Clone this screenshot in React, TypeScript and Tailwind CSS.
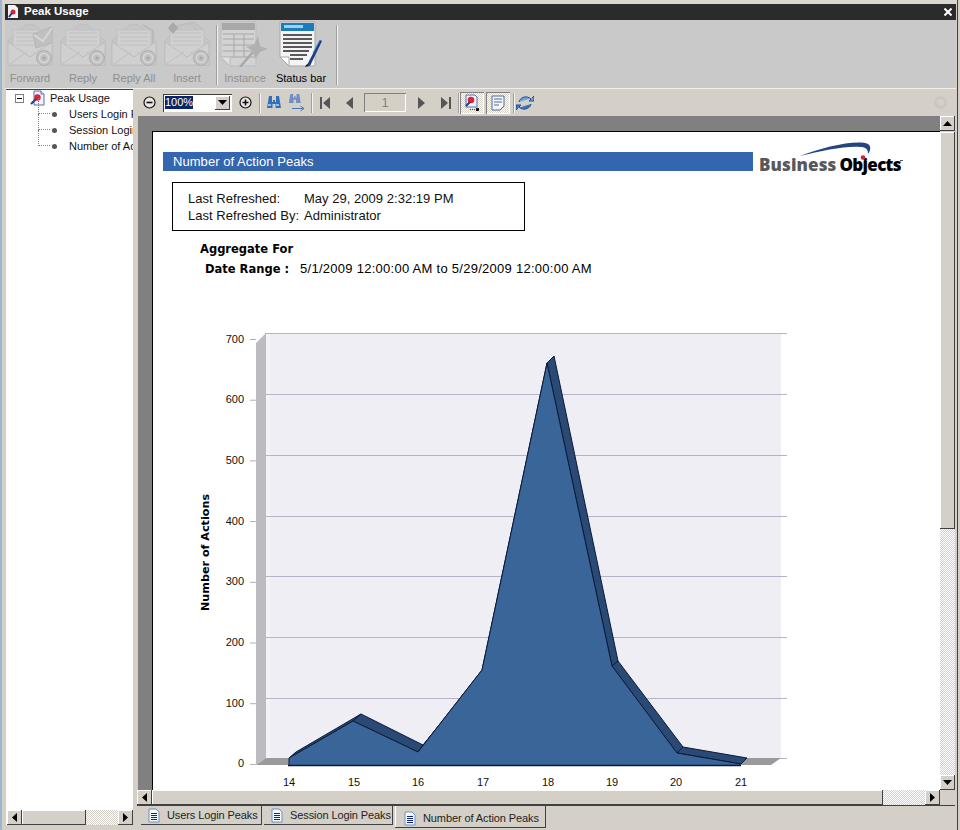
const sans = { fontFamily: '"Liberation Sans", Arial, sans-serif' };

function Envelope({ kind }: { kind: "forward" | "reply" | "all" | "insert" }) {
  return (
    <svg width="46" height="46" viewBox="0 0 46 46">
      {kind === "insert" && <path d="M12 5 L30 1 L40 9 L14 14 Z" fill="#c4c4c4" stroke="#bababa" />}
      <path d="M1 20 L16 6 Q23 0 30 6 L45 20 L45 44 L1 44 Z" fill="#c6c6c6" stroke="#bebebe" />
      <path d="M6 9 H40 V27 L23 36 L6 27 Z" fill="#d0d0d0" stroke="#c0c0c0" />
      <path d="M9 12 H37 M9 16 H37 M9 20 H37 M9 24 H37" stroke="#c0c0c0" />
      {kind === "all" && <path d="M32 4 L42 10 V22" fill="none" stroke="#bababa" strokeWidth="2" />}
      <path d="M1 21 L23 36 L45 21 V44 H1 Z" fill="#d0d0d0" stroke="#bebebe" />
      <path d="M1 44 L20 31 M45 44 L26 31" stroke="#c0c0c0" />
      {kind === "forward" && (
        <g>
          <path d="M26 13 L45 6 L47 21 L29 27 Z" fill="#c0c0c0" stroke="#b6b6b6" />
          <path d="M27 14 L36 20 L45 7" fill="none" stroke="#d6d6d6" strokeWidth="2" />
        </g>
      )}
      {kind === "insert" && <path d="M9 1 L14 7 L9 13 L4 7 Z" fill="#aaaaaa" />}
      <circle cx="37" cy="37" r="7.5" fill="#c0c0c0" stroke="#b0b0b0" />
      <circle cx="37" cy="37" r="4.5" fill="none" stroke="#d8d8d8" strokeWidth="1.4" />
      <circle cx="37" cy="37" r="1.6" fill="#a8a8a8" />
    </svg>
  );
}

function InstanceIcon() {
  return (
    <svg width="50" height="46" viewBox="0 0 50 46">
      <path d="M1 1 H36 V45 H10 L1 36 Z" fill="#d2d2d2" stroke="#bdbdbd" />
      <rect x="2" y="2" width="33" height="7" fill="#a8a8a8" />
      <path d="M3 13 H34 M3 18 H34 M3 24 H34 M3 30 H34 M3 36 H34 M14 13 V36 M24 13 V36" stroke="#a8a8a8" />
      <path d="M1 36 H10 V45 Z" fill="#e0e0e0" stroke="#bdbdbd" />
      <path d="M20 46 L33 31" stroke="#a8a8a8" strokeWidth="2.5" />
      <path d="M38 15 L40 25 L48 28 L40 31 L35 38 L33 30 L26 26 L34 24 Z" fill="#b0b0b0" />
    </svg>
  );
}

function StatusIcon() {
  return (
    <svg width="44" height="46" viewBox="0 0 44 46">
      <path d="M1 1 H36 V45 H10 L1 36 Z" fill="#f4f4f4" stroke="#a8a8a8" />
      <rect x="2" y="2" width="33" height="8" fill="#1a7cbc" />
      <rect x="5" y="4" width="19" height="3" fill="#9ed0ee" />
      <path d="M4 14 H33 M4 18 H33 M4 22 H33 M4 26 H33 M4 30 H30 M11 34 H28 M11 38 H24" stroke="#5a5a5a" strokeWidth="2" />
      <path d="M1 36 H10 V45 Z" fill="#fff" stroke="#a8a8a8" />
      <path d="M28 44 L41 19 L43 20 L31 45 Z" fill="#1d3f7c" />
      <path d="M34 32 L41 19" stroke="#3e86d0" />
      <path d="M26 46 L28 43 L30 45 Z" fill="#111" />
    </svg>
  );
}

function ToolButton({ label, width, disabled, children }: { label: string; width: string; disabled?: boolean; children: React.ReactNode }) {
  return (
    <div className={`flex shrink-0 flex-col items-center ${width}`}>
      <div className="flex h-[47px] items-start justify-center pt-[1px]">{children}</div>
      <span className={`mt-[4px] whitespace-nowrap text-[11px] leading-[14px] ${disabled ? "text-[#8f8f8f]" : "text-black"}`}>{label}</span>
    </div>
  );
}

function ToolSep({ className = "h-[60px]" }: { className?: string }) {
  return <div className={`w-[2px] shrink-0 border-l border-r border-l-[#9f9f9f] border-r-[#f2f2f2] ${className}`} />;
}

function Arrow({ dir, className = "" }: { dir: "up" | "down" | "left" | "right"; className?: string }) {
  const points = { up: "0,5 9,5 4.5,0", down: "0,0 9,0 4.5,5", left: "5,0 5,9 0,4.5", right: "0,0 0,9 5,4.5" }[dir];
  const h = dir === "up" || dir === "down";
  return (
    <svg width={h ? 9 : 5} height={h ? 5 : 9} viewBox={h ? "0 0 9 5" : "0 0 5 9"} className={className}>
      <polygon points={points} fill="#000" />
    </svg>
  );
}

function ScrollBtn({ dir }: { dir: "up" | "down" | "left" | "right" }) {
  return (
    <div className="flex h-[15px] w-[15px] shrink-0 items-center justify-center bg-[#d4d0c8] shadow-[inset_-1px_-1px_#404040,inset_1px_1px_#ffffff]">
      <Arrow dir={dir} />
    </div>
  );
}

const dither = "bg-[repeating-conic-gradient(#ffffff_0_25%,#d4d0c8_0_50%)] bg-[length:2px_2px]";
const thumb = "bg-[#d4d0c8] shadow-[inset_-1px_-1px_#404040,inset_1px_1px_#ffffff]";

function TreeChild({ label }: { label: string }) {
  return (
    <div className="flex h-4 items-center whitespace-nowrap pl-[32px]">
      <div className="mb-4 h-4 w-[12px] shrink-0 border-b border-l border-dotted border-[#808080]" />
      <div className="ml-[2px] h-[5px] w-[5px] shrink-0 rounded-full bg-[#555555]" />
      <span className="ml-[12px] text-[11px] text-[#111111]">{label}</span>
    </div>
  );
}

function TreeIcon() {
  return (
    <svg width="16" height="16" viewBox="0 0 16 16">
      <path d="M4 1 H11 L14 4 V15 H4 Z" fill="#eef3fb" stroke="#5a6fa8" />
      <path d="M11 1 V4 H14" fill="#fff" stroke="#5a6fa8" />
      <circle cx="7.5" cy="7.5" r="3.2" fill="#e2203a" />
      <path d="M1 14 L6 9" stroke="#1e3f90" strokeWidth="2" />
    </svg>
  );
}

function CircleBtn({ plus }: { plus?: boolean }) {
  return (
    <svg width="13" height="13" viewBox="0 0 13 13">
      <circle cx="6.5" cy="6.5" r="5.5" fill="#e8e6e0" stroke="#111" strokeWidth="1.2" />
      <path d={plus ? "M3.5 6.5 H9.5 M6.5 3.5 V9.5" : "M3.5 6.5 H9.5"} stroke="#111" strokeWidth="1.6" />
    </svg>
  );
}

function Binoculars({ arrow }: { arrow?: boolean }) {
  return (
    <svg width="18" height="18" viewBox="0 0 18 18">
      <g fill={arrow ? "#6f8fc4" : "#2f6fc0"} transform={arrow ? "translate(0 -2) scale(0.85)" : "translate(1 1)"}>
        <path d="M3 1 H6 V7 H7 V5 H9 V7 H10 V1 H13 L15 13 H9.5 V9 H6.5 V13 H1 Z" />
      </g>
      {!arrow && <path d="M3 11 H6 M11 11 H14" stroke="#bcd4f2" strokeWidth="1.5" />}
      {arrow && <path d="M4 14.5 H15 M12.5 12 L16 14.5 L12.5 17" fill="none" stroke="#4d74b4" />}
    </svg>
  );
}

function PageNav({ dir }: { dir: "first" | "prev" | "next" | "last" }) {
  const d = {
    first: "M2 1 H4 V13 H2 Z M12 1 V13 L5 7 Z",
    prev: "M11 1 V13 L4 7 Z",
    next: "M4 1 V13 L11 7 Z",
    last: "M3 1 V13 L10 7 Z M11 1 H13 V13 H11 Z",
  }[dir];
  return (
    <svg width="15" height="14" viewBox="0 0 15 14">
      <path d={d} fill="#555555" />
    </svg>
  );
}

function TreeToggleIcon() {
  return (
    <svg width="18" height="18" viewBox="0 0 18 18">
      <path d="M3 1 H12 L14 3 V13 H3 Z" fill="#eef3fb" stroke="#5a6fa8" />
      <circle cx="8" cy="6" r="3.3" fill="#e2203a" />
      <path d="M3 12 L7 8" stroke="#1e3f90" strokeWidth="2" />
      <path d="M7 15.5 H12" stroke="#555" strokeDasharray="1 1" />
      <rect x="13" y="14" width="3" height="3" fill="#111" />
    </svg>
  );
}

function NoteIcon() {
  return (
    <svg width="16" height="16" viewBox="0 0 16 16">
      <path d="M2 1 H14 V11 L10 15 H2 Z" fill="#f7f7f2" stroke="#4f6aa8" />
      <path d="M4 4 H12 M4 7 H12 M4 10 H9" stroke="#4f6aa8" />
    </svg>
  );
}

function RefreshIcon() {
  return (
    <svg width="18" height="16" viewBox="0 0 18 16">
      <path d="M3 7 C4 2 11 0 15 4 L13 6 H18 V1 L16 3" fill="#6fa0d8" stroke="#23508f" />
      <path d="M15 9 C14 14 7 16 3 12 L5 10 H0 V15 L2 13" fill="#3c74b8" stroke="#23508f" />
    </svg>
  );
}

function DocIcon() {
  return (
    <svg width="12" height="15" viewBox="0 0 12 15" className="shrink-0">
      <path d="M1 1 H8 L11 4 V14 H1 Z" fill="#f4f8ff" stroke="#6f8fc6" />
      <path d="M3 5.5 H9 M3 7.5 H9 M3 9.5 H9 M3 11.5 H9" stroke="#12238a" />
    </svg>
  );
}

function Tab({ label, width, active, className = "" }: { label: string; width: string; active?: boolean; className?: string }) {
  return (
    <div
      className={`flex shrink-0 items-center whitespace-nowrap bg-[#d4d0c8] text-[11px] tracking-[-0.1px] text-[#222222] ${width} ${className} ${
        active ? "h-[22px] pl-[9px] pt-[2px] shadow-[inset_-1px_-1px_#404040,inset_1px_0_#ffffff]" : "h-[19px] pl-[7px] shadow-[inset_-1px_-1px_#404040]"
      }`}
    >
      <DocIcon />
      <span className="ml-[7px]">{label}</span>
    </div>
  );
}

// chart points: front edge and the shifted back edge of the 3d area
const front: [number, number][] = [[289, 758], [353, 721], [418, 752], [482, 670], [547, 363], [612, 666], [677, 753], [741, 764]];
const back: [number, number][] = [[296, 752], [361, 714], [423, 745], [489, 664], [554, 356], [618, 661], [683, 747], [747, 758]];
const grid = [333, 394, 455, 516, 576, 637, 698, 758];
const yLabels = ["700", "600", "500", "400", "300", "200", "100", "0"];
const xLabels = [
  ["14", 289],
  ["15", 354],
  ["16", 418],
  ["17", 483],
  ["18", 548],
  ["19", 612],
  ["20", 676],
  ["21", 741],
] as const;

function Chart() {
  const frontLine = front.map((p) => p.join(",")).join(" ");
  return (
    <svg width="610" height="465" viewBox="190 325 610 465" className="ml-[37px] mt-[48px] block shrink-0" style={sans}>
      <rect x="266" y="333" width="515" height="425" fill="#eeeef4" />
      <rect x="266" y="333" width="4" height="425" fill="#f2f2f7" />
      {grid.map((y) => (
        <line key={y} x1="265" x2="787" y1={y + 0.5} y2={y + 0.5} stroke="#b4b4c6" />
      ))}
      <polygon points="256,343 266,333 266,758 256,765" fill="#bcbcc0" />
      <polygon points="256,765 266,758 781,758 771,765" fill="#9a9a9a" />
      {yLabels.map((label, i) => {
        const y = 339.5 + i * 60.7;
        return (
          <g key={label}>
            <line x1="250" x2="256" y1={y} y2={y} stroke="#b0b0b0" />
            <text x="244" y={y + 3} textAnchor="end" fontSize="11" fill="#111">
              {label}
            </text>
          </g>
        );
      })}
      {front.slice(0, -1).map((p, i) => (
        <polygon
          key={i}
          points={`${p[0]},${p[1]} ${back[i][0]},${back[i][1]} ${back[i + 1][0]},${back[i + 1][1]} ${front[i + 1][0]},${front[i + 1][1]}`}
          fill="#2a4a75"
          stroke="#0a1a3a"
          strokeWidth="1"
        />
      ))}
      <polygon points={`289,765 ${frontLine} 741,765`} fill="#3a6598" />
      <polyline points={`289,765 ${frontLine}`} fill="none" stroke="#0a1a3a" strokeWidth="1" />
      <line x1="288" x2="741" y1="765.5" y2="765.5" stroke="#0a1a3a" strokeWidth="1.4" />
      {xLabels.map(([label, x]) => (
        <text key={label} x={x} y="786" textAnchor="middle" fontSize="11" fill="#111">
          {label}
        </text>
      ))}
      <text transform="translate(209 552.5) rotate(-90)" textAnchor="middle" fontWeight="700" fill="#000" style={{ fontFamily: '"DejaVu Sans", sans-serif', fontSize: 11.2 }}>
        Number of Actions
      </text>
    </svg>
  );
}

function Logo() {
  return (
    <div className="relative ml-[6px] mt-[3px] whitespace-nowrap text-[17px] font-extrabold leading-[19px] tracking-[0.1px]" style={{ fontFamily: '"Open Sans", sans-serif' }}>
      <span className="text-[#58585a]">Business</span>
      <span className="ml-[3px] tracking-[-0.7px] text-black">Objects</span>
      <span className="absolute left-[141px] top-[5px] h-px w-[3px] bg-[#555555]" />
      <svg width="80" height="20" viewBox="0 0 80 20" className="absolute left-[41px] top-[-13px]">
        <path d="M0 14 C22 5 58 -3 68 2 C71 4 71 8 68 12 C68 7 66 5 60 5 C44 4 22 9 0 14 Z" fill="#24457f" />
        <circle cx="63" cy="15.5" r="2.3" fill="#d3213c" />
      </svg>
    </div>
  );
}

function Report() {
  return (
    <div className="flex h-full flex-col overflow-hidden border-l border-t border-black bg-white pt-[20px] text-[#111111]" style={sans}>
      <div className="ml-[10px] flex h-[19px]">
        <div className="flex h-[19px] w-[590px] shrink-0 items-center bg-[#3366ae] pl-[10px] text-[13px] tracking-[0.05px] text-white">Number of Action Peaks</div>
        <Logo />
      </div>
      <div className="ml-[19px] mt-[11px] h-[49px] w-[353px] shrink-0 border border-black pl-[15px] pt-[7px] text-[13px] leading-[17px] tracking-[0.03px]">
        <div className="flex">
          <span className="w-[116px]">Last Refreshed:</span>
          <span>May 29, 2009 2:32:19 PM</span>
        </div>
        <div className="flex">
          <span className="w-[116px]">Last Refreshed By:</span>
          <span>Administrator</span>
        </div>
      </div>
      <div className="ml-[47px] mt-[10px] h-4 text-[11.5px] font-bold leading-4 text-black" style={{ fontFamily: '"DejaVu Sans", sans-serif' }}>
        Aggregate For
      </div>
      <div className="ml-[52px] mt-[4px] flex h-4 text-[13px] leading-4 text-black">
        <span className="w-[95px] text-[11.5px] font-bold" style={{ fontFamily: '"DejaVu Sans", sans-serif' }}>
          Date Range :
        </span>
        <span className="tracking-[0.27px]">5/1/2009 12:00:00 AM to 5/29/2009 12:00:00 AM</span>
      </div>
      <Chart />
    </div>
  );
}

export default function App() {
  return (
    <div className="h-[830px] w-[960px] overflow-hidden border-l-2 border-l-[#9db5d0] bg-[#d4d0c8] pr-[2px]" style={sans}>
      <div className="flex h-full flex-col border-r border-[#404040]">
        <div className="h-1 shrink-0 bg-[#d8d6cf]" />
        <div className="ml-[3px] mr-px flex h-4 shrink-0 items-center justify-between bg-[#2b2b2b] pl-[2px] pr-[4px] text-white">
          <div className="flex items-center">
            <svg width="12" height="14" viewBox="0 0 12 14">
              <path d="M1 0 H8 L11 3 V13 H1 Z" fill="#f2f2f2" />
              <circle cx="6" cy="7" r="2.5" fill="#d9263c" />
              <path d="M2 12 L5 8" stroke="#1e3f90" strokeWidth="2" />
            </svg>
            <span className="ml-[5px] text-[11.5px] font-bold">Peak Usage</span>
          </div>
          <svg width="8" height="8" viewBox="0 0 8 8">
            <path d="M0.5 0.5 L7.5 7.5 M7.5 0.5 L0.5 7.5" stroke="#fff" strokeWidth="2" />
          </svg>
        </div>

        <div className="ml-[3px] mr-px flex h-[69px] shrink-0 items-start border-b border-[#f0efeb] bg-[#c9c9c9] text-[11px]">
          <ToolButton label="Forward" width="w-[50px]" disabled>
            <Envelope kind="forward" />
          </ToolButton>
          <ToolButton label="Reply" width="w-[56px]" disabled>
            <Envelope kind="reply" />
          </ToolButton>
          <ToolButton label="Reply All" width="w-[46px]" disabled>
            <Envelope kind="all" />
          </ToolButton>
          <ToolButton label="Insert" width="w-[60px]" disabled>
            <Envelope kind="insert" />
          </ToolButton>
          <ToolSep className="-ml-px mt-[5px] h-[60px]" />
          <ToolButton label="Instance" width="ml-px w-[52px]" disabled>
            <InstanceIcon />
          </ToolButton>
          <ToolButton label="Status bar" width="w-[60px]">
            <StatusIcon />
          </ToolButton>
          <ToolSep className="ml-[5px] mt-[5px] h-[60px]" />
        </div>

        <div className="flex min-h-0 flex-1 pl-[4px] pr-[2px]">
          <div className="flex w-[127px] shrink-0 flex-col border-t border-[#404040]">
            <div className="flex-1 overflow-hidden bg-white">
              <div className="flex h-4 items-center pl-[9px] text-[11px] text-[#111111]">
                <div className="flex h-[9px] w-[9px] shrink-0 items-center justify-center border border-[#808080] bg-white">
                  <div className="h-px w-[5px] bg-black" />
                </div>
                <div className="ml-[6px] shrink-0">
                  <TreeIcon />
                </div>
                <span className="ml-[4px] whitespace-nowrap">Peak Usage</span>
              </div>
              <TreeChild label="Users Login Peaks" />
              <TreeChild label="Session Login Peaks" />
              <TreeChild label="Number of Action Peaks" />
            </div>
            <div className="mb-[5px] flex h-[15px] shrink-0 bg-white pl-[1px]">
              <ScrollBtn dir="left" />
              <div className={`w-[64px] shrink-0 ${thumb}`} />
              <div className={`flex-1 ${dither}`} />
              <ScrollBtn dir="right" />
            </div>
          </div>

          <div className="ml-[4px] flex min-w-0 flex-1 flex-col">
            <div className="relative flex h-[27px] shrink-0 items-center pl-[3px]">
              <div className="flex w-[18px] justify-center">
                <CircleBtn />
              </div>
              <div className="ml-[5px] flex h-[18px] w-[69px] items-center bg-white p-[2px] shadow-[inset_1px_1px_#404040,inset_-1px_-1px_#ffffff]">
                <span className="bg-[#0a246a] text-[11px] leading-[13px] text-white">100%</span>
                <div className={`ml-auto flex h-[14px] w-[15px] items-center justify-center ${thumb}`}>
                  <Arrow dir="down" />
                </div>
              </div>
              <div className="ml-[4px] flex w-[18px] justify-center">
                <CircleBtn plus />
              </div>
              <ToolSep className="ml-[5px] h-[20px]" />
              <div className="ml-[3px] flex w-5 justify-center">
                <Binoculars />
              </div>
              <div className="ml-[3px] flex w-5 justify-center">
                <Binoculars arrow />
              </div>
              <ToolSep className="ml-[4px] h-[20px]" />
              <div className="ml-[3px] flex w-[18px] justify-center">
                <PageNav dir="first" />
              </div>
              <div className="ml-[6px] flex w-[18px] justify-center">
                <PageNav dir="prev" />
              </div>
              <div className="ml-[6px] flex h-[19px] w-[42px] items-center justify-center text-[12px] text-[#808080] shadow-[inset_1px_1px_#808080,inset_-1px_-1px_#ffffff]">1</div>
              <div className="ml-[6px] flex w-[18px] justify-center">
                <PageNav dir="next" />
              </div>
              <div className="ml-[6px] flex w-[18px] justify-center">
                <PageNav dir="last" />
              </div>
              <ToolSep className="ml-[4px] h-[20px]" />
              <div className={`flex h-[22px] w-6 items-center justify-center shadow-[inset_1px_1px_#808080,inset_-1px_-1px_#ffffff] ${dither}`}>
                <TreeToggleIcon />
              </div>
              <div className={`ml-[2px] flex h-[22px] w-6 items-center justify-center shadow-[inset_1px_1px_#808080,inset_-1px_-1px_#ffffff] ${dither}`}>
                <NoteIcon />
              </div>
              <ToolSep className="ml-[3px] h-[20px]" />
              <div className="ml-[1px] flex w-[18px] justify-center">
                <RefreshIcon />
              </div>
              <div className="absolute right-[8px] top-[7px] h-[13px] w-[13px] rounded-full border-[3px] border-[#cbc7bf]" />
            </div>

            <div className="flex h-[674px] shrink-0">
              <div className="ml-[1px] min-w-0 flex-1 bg-[#808080] pl-[14px] pt-[15px]">
                <Report />
              </div>
              <div className="flex w-[15px] shrink-0 flex-col">
                <ScrollBtn dir="up" />
                <div className={`mt-px h-[397px] shrink-0 ${thumb}`} />
                <div className={`flex-1 ${dither}`} />
                <ScrollBtn dir="down" />
              </div>
            </div>

            <div className="flex h-[16px] shrink-0 border-b border-[#404040] pr-[15px]">
              <ScrollBtn dir="left" />
              <div className={`w-[731px] shrink-0 ${thumb}`} />
              <div className={`flex-1 ${dither}`} />
              <ScrollBtn dir="right" />
            </div>

            <div className="flex items-start pl-[4px]">
              <Tab label="Users Login Peaks" width="w-[121px]" />
              <Tab label="Session Login Peaks" width="w-[129px]" className="ml-[2px]" />
              <Tab label="Number of Action Peaks" width="w-[151px]" className="ml-[2px]" active />
            </div>
          </div>
        </div>
      </div>
    </div>
  );
}
